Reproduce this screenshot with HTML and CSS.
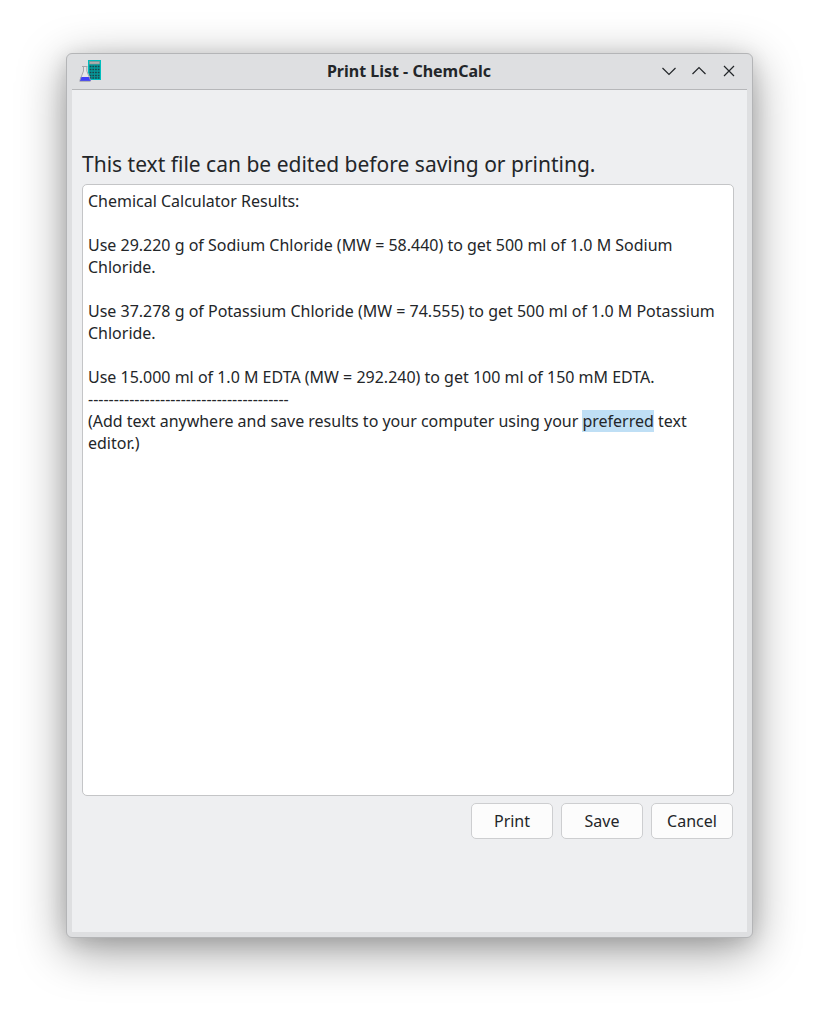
FILE: index.html
```html
<!DOCTYPE html>
<html lang="en">
<head>
<meta charset="utf-8">
<title>Print List - ChemCalc</title>
<link rel="stylesheet" href="styles.css">
</head>
<body>
<div class="window">
  <header class="titlebar">
    <svg class="app-icon" width="24" height="24" viewBox="0 0 24 24">
      <rect x="9.500" y="1.500" width="12" height="19" fill="#069a9c" stroke="#00bdbd"/>
      <rect x="10.500" y="2.500" width="10" height="2.500" fill="#b0aeae" stroke="#8b9a9a" stroke-width=".6"/>
      <path d="M10.700 7.500h10M10.700 10.500h10M10.700 13.500h10M10.700 16.500h10M10.700 19h10" fill="none" stroke="#1c4549" stroke-width="1.700" stroke-dasharray="1.700 1"/>
      <path d="M4 8h4v4l3 6H1.500L4 12z" fill="#e6e6e8"/>
      <path d="M1.800 18h8.900l1.300 4H.8z" fill="#4040f8"/>
      <path d="M3 7.500h5.500M4.500 8v4L.8 21.500M7.800 8v4l3.800 9.500M.5 22.300h11" fill="none" stroke="#a0a0a5" stroke-width=".9"/>
    </svg>
    <h1 class="title">Print List - ChemCalc</h1>
    <div class="controls">
      <svg class="control" viewBox="0 0 18 18"><path d="M2.500 6L9 12.500L15.500 6"/></svg>
      <svg class="control" viewBox="0 0 18 18"><path d="M2.500 12L9 5.500L15.500 12"/></svg>
      <svg class="control" viewBox="0 0 18 18"><path d="M4 4L14 14M14 4L4 14"/></svg>
    </div>
  </header>
  <main class="content">
    <p class="heading">This text file can be edited before saving or printing.</p>
    <div class="editor">Chemical Calculator Results:

Use 29.220 g of Sodium Chloride (MW = 58.440) to get 500 ml of 1.0 M Sodium Chloride.

Use 37.278 g of Potassium Chloride (MW = 74.555) to get 500 ml of 1.0 M Potassium Chloride.

Use 15.000 ml of 1.0 M EDTA (MW = 292.240) to get 100 ml of 150 mM EDTA.
---------------------------------------
(Add text anywhere and save results to your computer using your <span class="selected">preferred</span> text editor.)</div>
    <div class="actions">
      <button class="button">Print</button>
      <button class="button">Save</button>
      <button class="button">Cancel</button>
    </div>
  </main>
</div>
</body>
</html>
```
FILE: styles.css
```css
* { box-sizing: border-box; }
body {
  margin: 0;
  height: 1015px;
  padding: 53px 65px 77px 66px;
  overflow: hidden;
  background: #fff;
  color: #232629;
  font: 16px/22px "Noto Sans", sans-serif;
}
.window {
  display: flex;
  flex-direction: column;
  height: 885px;
  padding: 0 5px 5px;
  background: #dedfe1;
  border: 1px solid #b4b5b7;
  border-radius: 6px;
  box-shadow: 0 12px 48px rgba(0, 0, 0, .4), 0 4px 20px rgba(0, 0, 0, .12);
}
.titlebar {
  display: grid;
  grid-template-columns: 95px 1fr 96px;
  align-items: start;
  height: 36px;
  flex: none;
  border-bottom: 1px solid #b6b7b9;
}
.app-icon { margin: 5px 0 0 6.500px; }
.title {
  margin: 6px 0 0;
  font-size: 16px;
  font-weight: 700;
  line-height: 22px;
  text-align: center;
}
.controls {
  display: flex;
  justify-content: flex-end;
  gap: 12px;
  padding: 8px 9px 0 0;
}
.control {
  width: 18px;
  height: 18px;
  fill: none;
  stroke: #232629;
  stroke-width: 1.200;
}
.content {
  flex: 1;
  padding: 59px 13px 0 10px;
  background: #eeeff1;
}
.heading {
  margin: 0;
  height: 35px;
  font-size: 21px;
  line-height: 30px;
  white-space: nowrap;
}
.editor {
  height: 612px;
  padding: 5px;
  background: #fff;
  border: 1px solid #c4c5c7;
  border-radius: 5px;
  font-size: 15.990px;
  white-space: pre-wrap;
}
.selected { background: #bfdff5; }
.actions {
  display: flex;
  justify-content: flex-end;
  gap: 8px;
  margin: 7px 1px 0 0;
}
.button {
  width: 82px;
  height: 36px;
  padding: 0;
  background: #fcfcfc;
  border: 1px solid #cdced0;
  border-radius: 5px;
  color: inherit;
  font: inherit;
}
```
